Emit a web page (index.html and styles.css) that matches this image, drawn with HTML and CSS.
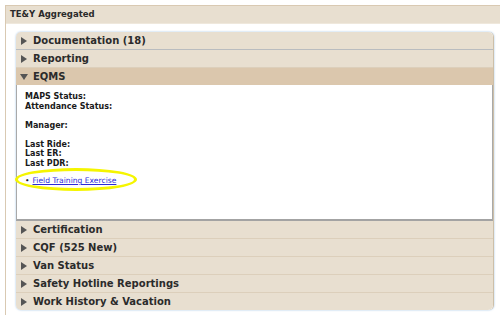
FILE: index.html
```html
<!DOCTYPE html>
<html lang="en">
<head>
    <meta charset="UTF-8">
    <title>TE&amp;Y Aggregated</title>
    <link rel="stylesheet" href="styles.css">
</head>
<body>

<div class="portlet">
    <div class="portlet-head">TE&amp;Y Aggregated</div>
    <div class="portlet-body">
        <div class="accordion">
            <div class="acc-head first"><span class="arrow right"></span>Documentation (18)</div>
            <div class="acc-head"><span class="arrow right"></span>Reporting</div>
            <div class="acc-head open"><span class="arrow down"></span>EQMS</div>
            <div class="acc-content">
                <p>MAPS Status:</p>
                <p>Attendance Status:</p>
                <p class="gap">Manager:</p>
                <p class="gap">Last Ride:</p>
                <p>Last ER:</p>
                <p>Last PDR:</p>
                <ul class="links">
                    <li><a href="#">Field Training Exercise</a></li>
                </ul>
                <!-- yellow marker drawn over the link -->
                <div class="marker"></div>
            </div>
            <div class="acc-head"><span class="arrow right"></span>Certification</div>
            <div class="acc-head"><span class="arrow right"></span>CQF (525 New)</div>
            <div class="acc-head"><span class="arrow right"></span>Van Status</div>
            <div class="acc-head"><span class="arrow right"></span>Safety Hotline Reportings</div>
            <div class="acc-head last"><span class="arrow right"></span>Work History &amp; Vacation</div>
        </div>
    </div>
</div>

</body>
</html>
```

FILE: styles.css
```css
* { margin: 0; padding: 0; box-sizing: border-box; }
html, body { height: 100%; overflow: hidden; }
body {
    background: #fff; font-family: "DejaVu Sans", Verdana, sans-serif; color: #222;
    padding: 5px 0 0 5px;
}
.portlet {
    border-left: 1px solid #d9c9b2; border-top: 1px solid #d9c9b2;
    height: 100%;
}
.portlet-head {
    background: #e8dfd0; height: 18px; line-height: 17px;
    font-size: 8.5px; font-weight: bold; padding-left: 4px; color: #2a2a2a;
    border-bottom: 1px solid #efe8dc;
}
.portlet-body { padding: 8px 0 0 10px; }
.accordion {
    width: 478px; border-radius: 5px;
    box-shadow: 0 0 2px rgba(120, 170, 220, 0.8);
    border-right: 1px solid #cdbfa8;
}
.acc-head {
    background: #e8dfd0; height: 18px; line-height: 17px;
    font-size: 10px; font-weight: bold; color: #2b2b2b;
    padding-left: 5px; display: flex; align-items: center;
    border-bottom: 1px solid #dccfbb;
}
.acc-head.first { border-radius: 5px 5px 0 0; border-bottom-color: #b9bcbf; }
.acc-head.last { border-radius: 0 0 5px 5px; border-bottom: none; height: 17px; }
.acc-head.open { background: #dbc7ad; border-bottom: none; height: 17px; }
.arrow { width: 0; height: 0; margin-right: 6px; }
.arrow.right {
    border-top: 4px solid transparent; border-bottom: 4px solid transparent;
    border-left: 6px solid #555;
}
.arrow.down {
    border-left: 4px solid transparent; border-right: 4px solid transparent;
    border-top: 6px solid #555; margin-left: -1px; margin-right: 5px;
}
.acc-content {
    background: #fff; position: relative; height: 136px;
    border: 1px solid #a9a9a9; border-bottom: 2px solid #a3a3a3; border-top: none;
    padding: 7px 0 0 8px;
}
.acc-content p { font-size: 8px; font-weight: bold; line-height: 9.5px; color: #1a1a1a; }
.acc-content p.gap { margin-top: 9.5px; }
.links { list-style: none; margin-top: 8px; font-size: 7.6px; }
.links li::before { content: "\2022"; margin-right: 3px; color: #222; }
.links a { color: #2b2bd9; text-decoration: underline; }
.marker {
    position: absolute; left: -2px; top: 83px; width: 122px; height: 23px;
    border: 3px solid #f5f500; border-radius: 50%;
}
```
